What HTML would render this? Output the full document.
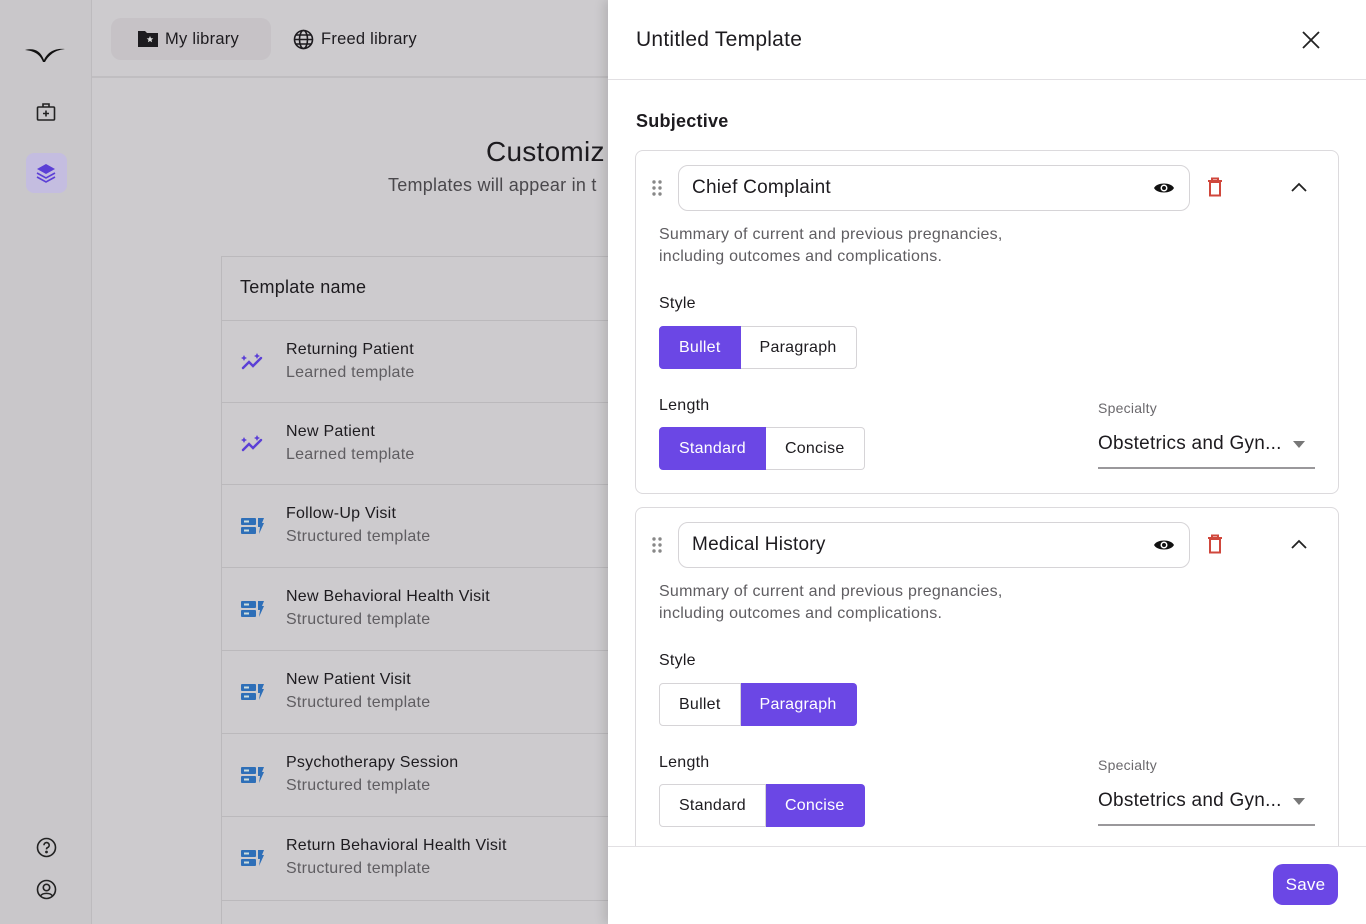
<!DOCTYPE html>
<html style="overflow:hidden;width:1366px;height:924px"><head><meta charset="utf-8"><style>
*{box-sizing:border-box;margin:0;padding:0}
body{width:1366px;height:924px;overflow:hidden;position:relative;font-family:"Liberation Sans",sans-serif;background:#cdcbce;color:#1d1b1f;letter-spacing:0.25px}
.a{position:absolute}
.side{left:0;top:0;width:92px;height:924px;background:#c9c7ca;border-right:1px solid #bdbbbe}
.top{left:92px;top:0;width:516px;height:78px;border-bottom:2px solid #c0bec1}
.tab{font-size:16.5px;color:#1d1b1f}
.table{left:221px;top:256px;width:400px;height:668px;border:1px solid #bbb9bc;border-bottom:none;background:#cdcbce}
.row{position:absolute;left:0;width:100%;height:83px;border-top:1px solid #bbb9bc}
.row .t{position:absolute;left:64px;top:20px;font-size:16px;color:#1d1b1f}
.row .s{position:absolute;left:64px;top:43px;font-size:16px;color:#5f5d61}
.row svg{position:absolute;left:18px;top:30px}
.panel{left:608px;top:0;width:758px;height:924px;background:#fff;box-shadow:-4px 0 10px rgba(0,0,0,.12)}
.card{position:absolute;left:27px;width:704px;border:1px solid #dcdadd;border-radius:8px;background:#fff}
.inp{position:absolute;left:42px;top:14px;width:512px;height:46px;border:1px solid #d6d4d7;border-radius:10px;font-size:19px;padding:11px 0 0 13px}
.desc{position:absolute;left:23px;font-size:16px;color:#5f5d61;line-height:22px}
.lab{position:absolute;left:23px;font-size:16px;color:#1d1b1f}
.seg{position:absolute;left:23px;display:flex;height:43px}
.seg div{border:1px solid #d6d4d7;font-size:16px;padding:0 19px;line-height:41px;color:#1d1b1f}
.seg div:first-child{border-radius:4px 0 0 4px}
.seg div:last-child{border-radius:0 4px 4px 0;border-left:none}
.seg .on{background:#6b47e5;color:#fff;border-color:#6b47e5}
.spec{position:absolute;left:462px;width:217px}
</style></head><body>
<div class="a side">
<svg class="a" style="left:24px;top:46px" width="42" height="18" viewBox="0 0 42 18"><path d="M1 4 C10 2 16 4 20 14 C24 5 32 2 41 3 C33 4 26 7 21 16 L19 16 C16 8 10 5 1 4Z" fill="#111"/></svg>
<svg class="a" style="left:36px;top:102px" width="20" height="20" viewBox="0 0 20 20" fill="none" stroke="#222" stroke-width="1.6"><rect x="1.5" y="5" width="17" height="13" rx="1"/><path d="M7 5V2h6v3M10 8.5v6M7 11.5h6"/></svg>
<div class="a" style="left:26px;top:153px;width:41px;height:40px;border-radius:8px;background:#c4bde0"></div>
<svg class="a" style="left:35px;top:162px" width="22" height="22" viewBox="0 0 22 22"><path d="M11 2 20 7 11 12 2 7Z" fill="#5b3fd6"/><path d="M2 11l9 5 9-5M2 15l9 5 9-5" fill="none" stroke="#5b3fd6" stroke-width="1.6"/></svg>
<svg class="a" style="left:36px;top:837px" width="21" height="21" viewBox="0 0 21 21" fill="none" stroke="#222" stroke-width="1.6"><circle cx="10.5" cy="10.5" r="9"/><path d="M8 8.2a2.6 2.6 0 1 1 3.5 2.4c-.8.4-1 .9-1 1.8"/><circle cx="10.5" cy="15" r=".6" fill="#222"/></svg>
<svg class="a" style="left:36px;top:879px" width="21" height="21" viewBox="0 0 21 21" fill="none" stroke="#222" stroke-width="1.6"><circle cx="10.5" cy="10.5" r="9"/><circle cx="10.5" cy="8.5" r="3.2"/><path d="M4.5 17c2-3.5 10-3.5 12 0"/></svg>
</div>
<div class="a top">
<div class="a" style="left:19px;top:18px;width:160px;height:42px;border-radius:10px;background:#c6c2c6"></div>
<svg class="a" style="left:46px;top:30px" width="20" height="17" viewBox="0 0 20 17"><path d="M0 1h7l2 2h11v14H0Z" fill="#1d1b1f"/><path d="M12 6l1 2.2 2.3.2-1.8 1.5.6 2.3-2.1-1.2-2.1 1.2.6-2.3-1.8-1.5 2.3-.2Z" fill="#ddd"/></svg>
<div class="a tab" style="left:73px;top:30px">My library</div>
<svg class="a" style="left:201px;top:29px" width="21" height="21" viewBox="0 0 21 21" fill="none" stroke="#1d1b1f" stroke-width="1.6"><circle cx="10.5" cy="10.5" r="9"/><ellipse cx="10.5" cy="10.5" rx="4" ry="9"/><path d="M1.5 10.5h18M3 6h15M3 15h15"/></svg>
<div class="a tab" style="left:229px;top:30px">Freed library</div>
</div>
<div class="a" style="left:486px;top:136px;font-size:28px;color:#1d1b1f">Customiz</div>
<div class="a" style="left:388px;top:175px;font-size:18px;color:#4a484c">Templates will appear in t</div>
<div class="a table">
<div class="a" style="left:18px;top:20px;font-size:18px">Template name</div>
<div class="row" style="top:63px"><svg width="26" height="22" viewBox="0 0 26 22"><path d="M3 17l6-6 4 4 8-8" fill="none" stroke="#5b3fd6" stroke-width="2.4" stroke-linecap="round"/><path d="M4 4l1 2 2 1-2 1-1 2-1-2-2-1 2-1Z M17 2l1 2 2 1-2 1-1 2-1-2-2-1 2-1Z" fill="#5b3fd6"/></svg><div class="t">Returning Patient</div><div class="s">Learned template</div></div>
<div class="row" style="top:145px"><svg width="26" height="22" viewBox="0 0 26 22"><path d="M3 17l6-6 4 4 8-8" fill="none" stroke="#5b3fd6" stroke-width="2.4" stroke-linecap="round"/><path d="M4 4l1 2 2 1-2 1-1 2-1-2-2-1 2-1Z M17 2l1 2 2 1-2 1-1 2-1-2-2-1 2-1Z" fill="#5b3fd6"/></svg><div class="t">New Patient</div><div class="s">Learned template</div></div>
<div class="row" style="top:227px"><svg width="26" height="22" viewBox="0 0 26 22"><rect x="1" y="3" width="15" height="7" rx="1" fill="#2e6fb8"/><rect x="1" y="12" width="15" height="7" rx="1" fill="#2e6fb8"/><rect x="4" y="5.5" width="5" height="2" fill="#cdd"/><rect x="4" y="14.5" width="5" height="2" fill="#cdd"/><path d="M18 3h6l-2 5h2l-5 11 1-7h-2Z" fill="#2e6fb8"/></svg><div class="t">Follow-Up Visit</div><div class="s">Structured template</div></div>
<div class="row" style="top:310px"><svg width="26" height="22" viewBox="0 0 26 22"><rect x="1" y="3" width="15" height="7" rx="1" fill="#2e6fb8"/><rect x="1" y="12" width="15" height="7" rx="1" fill="#2e6fb8"/><rect x="4" y="5.5" width="5" height="2" fill="#cdd"/><rect x="4" y="14.5" width="5" height="2" fill="#cdd"/><path d="M18 3h6l-2 5h2l-5 11 1-7h-2Z" fill="#2e6fb8"/></svg><div class="t">New Behavioral Health Visit</div><div class="s">Structured template</div></div>
<div class="row" style="top:393px"><svg width="26" height="22" viewBox="0 0 26 22"><rect x="1" y="3" width="15" height="7" rx="1" fill="#2e6fb8"/><rect x="1" y="12" width="15" height="7" rx="1" fill="#2e6fb8"/><rect x="4" y="5.5" width="5" height="2" fill="#cdd"/><rect x="4" y="14.5" width="5" height="2" fill="#cdd"/><path d="M18 3h6l-2 5h2l-5 11 1-7h-2Z" fill="#2e6fb8"/></svg><div class="t">New Patient Visit</div><div class="s">Structured template</div></div>
<div class="row" style="top:476px"><svg width="26" height="22" viewBox="0 0 26 22"><rect x="1" y="3" width="15" height="7" rx="1" fill="#2e6fb8"/><rect x="1" y="12" width="15" height="7" rx="1" fill="#2e6fb8"/><rect x="4" y="5.5" width="5" height="2" fill="#cdd"/><rect x="4" y="14.5" width="5" height="2" fill="#cdd"/><path d="M18 3h6l-2 5h2l-5 11 1-7h-2Z" fill="#2e6fb8"/></svg><div class="t">Psychotherapy Session</div><div class="s">Structured template</div></div>
<div class="row" style="top:559px"><svg width="26" height="22" viewBox="0 0 26 22"><rect x="1" y="3" width="15" height="7" rx="1" fill="#2e6fb8"/><rect x="1" y="12" width="15" height="7" rx="1" fill="#2e6fb8"/><rect x="4" y="5.5" width="5" height="2" fill="#cdd"/><rect x="4" y="14.5" width="5" height="2" fill="#cdd"/><path d="M18 3h6l-2 5h2l-5 11 1-7h-2Z" fill="#2e6fb8"/></svg><div class="t">Return Behavioral Health Visit</div><div class="s">Structured template</div></div>
<div class="row" style="top:643px;height:25px"></div>
</div>
<div class="a panel">
<div class="a" style="left:28px;top:28px;font-size:21px;color:#1d1b1f">Untitled Template</div>
<svg class="a" style="left:694px;top:31px" width="18" height="18" viewBox="0 0 18 18" stroke="#222" stroke-width="1.8"><path d="M1 1l16 16M17 1 1 17"/></svg>
<div class="a" style="left:0;top:79px;width:758px;height:1px;background:#e2e0e3"></div>
<div class="a" style="left:28px;top:111px;font-size:18px;font-weight:bold">Subjective</div>

<div class="card" style="top:150px;height:344px">
<svg class="a" style="left:16px;top:29px" width="10" height="16" viewBox="0 0 10 16" fill="#888"><circle cx="2" cy="2" r="1.7"/><circle cx="8" cy="2" r="1.7"/><circle cx="2" cy="8" r="1.7"/><circle cx="8" cy="8" r="1.7"/><circle cx="2" cy="14" r="1.7"/><circle cx="8" cy="14" r="1.7"/></svg>
<div class="inp">Chief Complaint</div>
<svg class="a" style="left:517px;top:29px" width="22" height="16" viewBox="0 0 22 16"><path d="M1 8C4 2 18 2 21 8 18 14 4 14 1 8Z" fill="#111"/><circle cx="11" cy="8" r="3.5" fill="#fff"/><circle cx="11" cy="8" r="2" fill="#111"/></svg>
<svg class="a" style="left:571px;top:26px" width="16" height="20" viewBox="0 0 16 20" fill="none" stroke="#d0473c" stroke-width="2"><path d="M1 4h14M5 4V1.5h6V4"/><rect x="3" y="5" width="10" height="13.5"/></svg>
<svg class="a" style="left:655px;top:31px" width="16" height="10" viewBox="0 0 16 10" fill="none" stroke="#222" stroke-width="1.8"><path d="M1 9l7-7 7 7"/></svg>
<div class="desc" style="top:73px">Summary of current and previous pregnancies,<br>including outcomes and complications.</div>
<div class="lab" style="top:144px">Style</div>
<div class="seg" style="top:175px"><div class="on">Bullet</div><div>Paragraph</div></div>
<div class="lab" style="top:246px">Length</div>
<div class="seg" style="top:276px"><div class="on">Standard</div><div>Concise</div></div>
<div class="spec" style="top:249px;font-size:14px;color:#6b696d">Specialty</div>
<div class="spec" style="top:282px;font-size:19px">Obstetrics and Gyn...</div>
<svg class="a" style="left:657px;top:290px" width="12" height="7"><path d="M0 0h12L6 7Z" fill="#777"/></svg>
<div class="spec" style="top:316px;height:2px;background:#9a989b"></div>
</div>

<div class="card" style="top:507px;height:360px">
<svg class="a" style="left:16px;top:29px" width="10" height="16" viewBox="0 0 10 16" fill="#888"><circle cx="2" cy="2" r="1.7"/><circle cx="8" cy="2" r="1.7"/><circle cx="2" cy="8" r="1.7"/><circle cx="8" cy="8" r="1.7"/><circle cx="2" cy="14" r="1.7"/><circle cx="8" cy="14" r="1.7"/></svg>
<div class="inp">Medical History</div>
<svg class="a" style="left:517px;top:29px" width="22" height="16" viewBox="0 0 22 16"><path d="M1 8C4 2 18 2 21 8 18 14 4 14 1 8Z" fill="#111"/><circle cx="11" cy="8" r="3.5" fill="#fff"/><circle cx="11" cy="8" r="2" fill="#111"/></svg>
<svg class="a" style="left:571px;top:26px" width="16" height="20" viewBox="0 0 16 20" fill="none" stroke="#d0473c" stroke-width="2"><path d="M1 4h14M5 4V1.5h6V4"/><rect x="3" y="5" width="10" height="13.5"/></svg>
<svg class="a" style="left:655px;top:31px" width="16" height="10" viewBox="0 0 16 10" fill="none" stroke="#222" stroke-width="1.8"><path d="M1 9l7-7 7 7"/></svg>
<div class="desc" style="top:73px">Summary of current and previous pregnancies,<br>including outcomes and complications.</div>
<div class="lab" style="top:144px">Style</div>
<div class="seg" style="top:175px"><div>Bullet</div><div class="on">Paragraph</div></div>
<div class="lab" style="top:246px">Length</div>
<div class="seg" style="top:276px"><div>Standard</div><div class="on">Concise</div></div>
<div class="spec" style="top:249px;font-size:14px;color:#6b696d">Specialty</div>
<div class="spec" style="top:282px;font-size:19px">Obstetrics and Gyn...</div>
<svg class="a" style="left:657px;top:290px" width="12" height="7"><path d="M0 0h12L6 7Z" fill="#777"/></svg>
<div class="spec" style="top:316px;height:2px;background:#9a989b"></div>
</div>

<div class="a" style="left:0;top:846px;width:758px;height:78px;background:#fff;border-top:1px solid #e2e0e3"></div>
<div class="a" style="left:665px;top:864px;width:65px;height:41px;border-radius:10px;background:#6b47e5;color:#fff;font-size:17px;text-align:center;line-height:41px">Save</div>
</div>
</body></html>
